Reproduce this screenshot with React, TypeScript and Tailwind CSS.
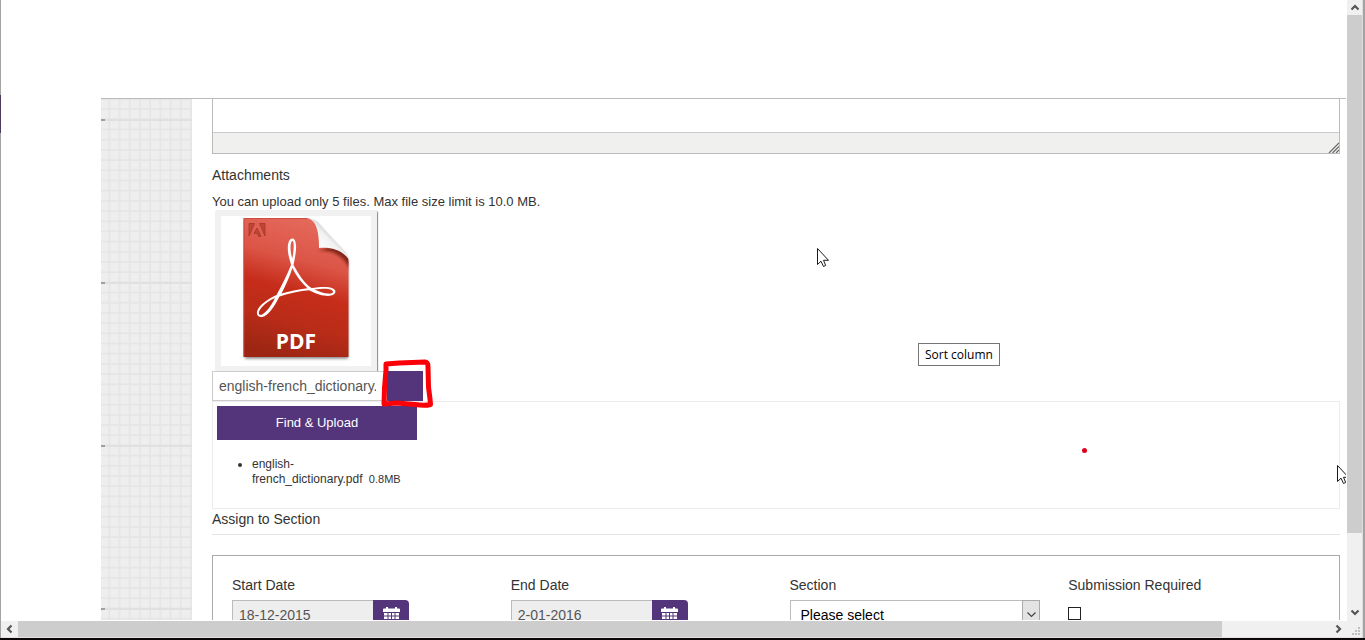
import React from "react";

function GridBackdrop() {
  return (
    <svg className="absolute inset-0 h-full w-full" aria-hidden="true">
      <defs>
        <pattern id="cells" x="-1" y="11" width="10.2" height="10.19" patternUnits="userSpaceOnUse">
          <rect width="10.2" height="10.19" fill="#eeeeee" />
          <rect x="8.6" width="1.6" height="10.19" fill="#e5e5e5" />
          <rect y="8.6" width="10.2" height="1.59" fill="#e5e5e5" />
        </pattern>
        <pattern id="ticks" x="0" y="20" width="91" height="163" patternUnits="userSpaceOnUse">
          <rect width="91" height="2" fill="#e0e0e0" />
          <rect width="4" height="2" fill="#a0a0a0" />
        </pattern>
      </defs>
      <rect width="100%" height="100%" fill="url(#cells)" />
      <rect width="100%" height="100%" fill="url(#ticks)" />
    </svg>
  );
}

function PdfIcon() {
  return (
    <svg viewBox="0 0 150 150" className="block h-[150px] w-[150px]" role="img" aria-label="PDF file">
      <defs>
        <linearGradient id="red" x1="0.6" y1="0" x2="0.4" y2="1">
          <stop offset="0" stopColor="#e46a5c" />
          <stop offset="0.3" stopColor="#dc5547" />
          <stop offset="0.52" stopColor="#c62d1a" />
          <stop offset="0.75" stopColor="#b92c18" />
          <stop offset="1" stopColor="#9c2613" />
        </linearGradient>
        <linearGradient id="curl" x1="0.25" y1="0.75" x2="0.7" y2="0.3">
          <stop offset="0" stopColor="#ffffff" />
          <stop offset="0.55" stopColor="#f2f2f2" />
          <stop offset="1" stopColor="#b0b0b0" />
        </linearGradient>
        <filter id="soft" x="-20%" y="-20%" width="140%" height="140%">
          <feGaussianBlur stdDeviation="1.6" />
        </filter>
        <clipPath id="sheet">
          <path d="M22.500 2H86C93 3 97 8 98 15L122 35Q127.500 39 127.500 46V141H22.500Z" />
        </clipPath>
      </defs>
      <path d="M24 6H95L127 44V142.500H24Z" fill="#000" opacity="0.5" filter="url(#soft)" />
      <path d="M22.500 2H86C93 3 97 8 98 15L122 35Q127.500 39 127.500 46V141H22.500Z" fill="url(#red)" />
      <g clipPath="url(#sheet)">
        <path d="M97 35C108 34 120 36 130 54L130 40L112 30Z" fill="#6c1308" opacity="0.8" filter="url(#soft)" />
      </g>
      <path d="M86 2C94 4 98 12 98 32C110 31 121 34 127.500 43C127 38 125 36 121 32L98 8Q93 2 86 2Z" fill="url(#curl)" />
      <path d="M23 140.500V2.500H86" fill="none" stroke="#c8483a" strokeWidth="0.8" />
      <g fill="#c04537" stroke="#9f3327" strokeWidth="0.7">
        <path d="M28 7.500H33.500L28 20Z" />
        <path d="M38.500 7.500H44V20Z" />
        <path d="M36 12L40 20.500H37.500L36.500 17.500H33Z" />
      </g>
      <path
        fillRule="evenodd"
        fill="#fff"
        d="M71.500 22.500C67 22.500 66 31 67.300 38C68 42 69.500 46 70 49C66 59 61 69 55.500 79C47 83 38 89 36.200 95C35 99 37.500 101.500 41 101C48 100 54 89 58.500 80.500C68 77 79 75 88 74.200C97 79 105 80.600 110 79.600C115 78.500 116 74.500 112 72.500C107 70 98 71 90.500 72C83 67 77 57 72.500 49C74 42 75.500 34 75 29C74.700 25 73.500 22.500 71.500 22.500ZM71.500 24.800C73.300 25.500 73 34 71.300 42.500C69 36 68.800 26 71.500 24.800ZM71.300 52C75 60 81 67 86.500 72.300C77 73.300 68 75.500 60.500 77.500C65 69 69 60 71.300 52ZM54 82C50 90 44 98 40 99C36.500 99 37.500 95 41 91C44 87.500 49 84 54 82ZM93.500 73.500C101 72.500 108 72.600 111 74.200C113.500 76 111 78 107 77.600C103 77.300 98 75.800 93.500 73.500Z"
      />
      <text x="75" y="133" textAnchor="middle" className="text-[21px] font-bold" fontFamily="Open Sans, sans-serif" fill="#fff">
        PDF
      </text>
    </svg>
  );
}

function CalendarIcon() {
  return (
    <svg viewBox="0 0 17 17" className="h-[17px] w-[17px]" fill="#fff" aria-hidden="true">
      <path d="M0 2.500Q0 1.500 1 1.500H3V0H5V1.500H12V0H14V1.500H16Q17 1.500 17 2.500V5H0Z" />
      <path d="M1 6H4.500V8.500H1ZM5.500 6H8V8.500H5.500ZM9 6H11.500V8.500H9ZM12.500 6H16V8.500H12.500ZM1 9.500H4.500V12H1ZM5.500 9.500H8V12H5.500ZM9 9.500H11.500V12H9ZM12.500 9.500H16V12H12.500ZM1 13H4.500V16H1ZM5.500 13H8V16H5.500ZM9 13H11.500V16H9Z" />
    </svg>
  );
}

function Pointer({ className }: { className: string }) {
  return (
    <svg viewBox="0 0 13 20" className={className} aria-hidden="true">
      <path d="M.5 .5V16.500L4 13.200L6.500 18.500L8.700 17.500L6.500 12.300H11.500Z" fill="#fff" stroke="#1a1a1a" />
    </svg>
  );
}

function Chevron({ d }: { d: string }) {
  return (
    <svg viewBox="0 0 10 10" className="h-[10px] w-[10px]" fill="none" stroke="#555" strokeWidth="2.200" aria-hidden="true">
      <path d={d} />
    </svg>
  );
}

function DateField({ id, label, value }: { id: string; label: string; value: string }) {
  return (
    <div className="px-[14px]">
      <label htmlFor={id} className="block leading-5">{label}</label>
      <div className="mt-[5px] flex">
        <input
          id={id}
          readOnly
          defaultValue={value}
          className="h-[30px] w-[141px] border border-r-0 border-[#bbb] bg-[#eeeeee] px-[6px] text-[#555] outline-none"
        />
        <button
          aria-label={`Choose ${label}`}
          className="flex h-[30px] w-[36px] items-center justify-center rounded-r-[4px] bg-[#54347a]"
        >
          <CalendarIcon />
        </button>
      </div>
    </div>
  );
}

function VerticalScroll() {
  return (
    <div className="flex w-[15px] flex-col bg-[#f0f0f0]">
      <button aria-label="Scroll up" className="flex h-[15px] items-center justify-center">
        <Chevron d="M1.500 6.500L5 3L8.500 6.500" />
      </button>
      <div className="grow-[518] bg-[#cdcdcd]" />
      <div className="grow-[71]" />
      <button aria-label="Scroll down" className="flex h-[17px] items-center justify-center">
        <Chevron d="M1.500 2.500L5 6L8.500 2.500" />
      </button>
    </div>
  );
}

function HorizontalScroll() {
  return (
    <div className="flex h-[16px] shrink-0 bg-[#f0f0f0]">
      <button aria-label="Scroll left" className="flex w-[17px] items-center justify-center">
        <Chevron d="M6.500 1.500L3 5L6.500 8.500" />
      </button>
      <div className="grow-[1204] bg-[#cdcdcd]" />
      <div className="grow-[108]" />
      <button aria-label="Scroll right" className="flex w-[17px] items-center justify-center">
        <Chevron d="M2.500 1.500L6 5L2.500 8.500" />
      </button>
      <svg viewBox="0 0 15 16" className="h-[16px] w-[15px]" fill="#bfbfbf" aria-hidden="true">
        <path d="M11 6h2v2h-2zM8 9h2v2h-2zM11 9h2v2h-2zM5 12h2v2h-2zM8 12h2v2h-2zM11 12h2v2h-2z" />
      </svg>
    </div>
  );
}

export default function App() {
  return (
    <div className="relative flex h-screen w-full flex-col overflow-hidden border-b-2 border-[#0b0706] bg-white font-['Liberation_Sans',sans-serif] text-[14px] text-[#333]">
      <div className="flex min-h-0 flex-1">
        <div className="flex w-px flex-col bg-[#a3a3a3]">
          <div className="mt-[95px] h-[38px] bg-[#4b3c63]" />
        </div>
        <div className="flex min-w-0 flex-1 flex-col border-b border-[#e2e2e2]">
          <div className="flex min-h-0 flex-1">
            <div className="relative mb-px mr-px flex min-w-0 flex-1 flex-col overflow-hidden">
              <header className="h-[98px] shrink-0" />
              <div className="ml-[100px] flex min-h-0 flex-1 overflow-hidden border-t border-[#bbb]">
                <aside className="relative w-[91px] shrink-0 bg-[#eee]">
                  <GridBackdrop />
                </aside>
                <main className="min-w-0 flex-1 pl-[20px] pr-[6px]">
                  <div className="border border-t-0 border-[#bbb]">
                    <div className="h-[33px]" />
                    <div className="flex h-[21px] items-end justify-end border-t border-[#ccc] bg-[#f0f0ef]">
                      <svg viewBox="0 0 11 11" className="h-[11px] w-[11px]" fill="none" stroke="#666" strokeWidth="1.200" aria-hidden="true">
                        <path d="M1 11L11 1M4.500 11L11 4.500M8 11L11 8" />
                      </svg>
                    </div>
                  </div>

                  <h2 className="mt-[11px] leading-5">Attachments</h2>
                  <p className="mt-[9px] text-[13px] leading-4">
                    You can upload only 5 files. Max file size limit is 10.0 MB.
                  </p>

                  <div className="ml-[3px] w-[162px] rounded-t-[2px] border-[6px] border-b-[5px] border-[#f1f1f1] bg-white shadow-[1px_1px_1px_#888]">
                    <PdfIcon />
                  </div>
                  <div className="relative flex h-[30px]">
                    <div className="w-[175px] border border-[#ccc] bg-white pl-[6px] pr-[10px]">
                      <input
                        aria-label="File name"
                        readOnly
                        defaultValue="english-french_dictionary.pdf"
                        className="block h-[28px] w-full text-[14px] text-[#555] outline-none"
                      />
                    </div>
                    <button aria-label="Remove file" className="h-[30px] w-[36px] bg-[#54347a]" />
                    <svg viewBox="0 0 54 52" className="absolute left-[168px] top-[-13px] h-[52px] w-[54px]" fill="none" aria-hidden="true">
                      <path d="M6 6L19 5L45 4Q48 4 48 9L48.500 29L50 41L50.500 46.500Q45 48 35 46.500L17 45L4 46L4.500 30L6 12Z" stroke="#fb0007" strokeWidth="5" strokeLinejoin="round" />
                    </svg>
                  </div>

                  <section className="h-[108px] border border-[#ececec] pl-[4px] pt-[4px]">
                    <button className="block h-[34px] w-[200px] bg-[#54347a] text-[13px] text-white">
                      Find &amp; Upload
                    </button>
                    <ul className="mt-[17px] w-[200px] list-disc pl-[35px] text-[12px] leading-[15px]">
                      <li>
                        english-
                        <br />
                        french_dictionary.pdf <span className="ml-[3px] text-[11px]">0.8MB</span>
                      </li>
                    </ul>
                  </section>

                  <h2 className="border-b border-[#e5e5e5] pb-[5px] leading-5">Assign to Section</h2>

                  <section className="mt-[20px] grid grid-cols-4 border border-[#aaa] pb-5 pl-[5px] pr-[6px] pt-[19px]">
                    <DateField id="start" label="Start Date" value="18-12-2015" />
                    <DateField id="end" label="End Date" value="2-01-2016" />
                    <div className="px-[14px]">
                      <label htmlFor="section" className="block leading-5">Section</label>
                      <div className="relative mt-[5px]">
                        <select
                          id="section"
                          className="block h-[30px] w-full appearance-none border border-[#bbb] bg-white pl-[10px] text-black outline-none"
                        >
                          <option>Please select</option>
                        </select>
                        <span className="pointer-events-none absolute right-0 top-0 flex h-[30px] w-[18px] items-center justify-center border border-[#aaa] bg-[#e3e3e3]">
                          <svg viewBox="0 0 9 6" className="h-[6px] w-[9px]" fill="none" stroke="#444" strokeWidth="1.200" aria-hidden="true">
                            <path d="M.5 .5L4.500 4.500L8.500 .5" />
                          </svg>
                        </span>
                      </div>
                    </div>
                    <div className="px-[14px]">
                      <label htmlFor="required" className="block leading-5">Submission Required</label>
                      <input
                        id="required"
                        type="checkbox"
                        className="mt-[12px] block h-[13px] w-[13px] appearance-none border border-[#222] bg-white"
                      />
                    </div>
                  </section>
                </main>
              </div>
              <Pointer className="absolute right-[-4px] top-[465px] h-[20px] w-[13px]" />
            </div>
            <VerticalScroll />
          </div>
          <HorizontalScroll />
        </div>
        <div className="w-[3px] border-l border-[#ddd] bg-[#a3a3a3]" />
      </div>

      <Pointer className="absolute left-[817px] top-[248px] h-[20px] w-[13px]" />
      <div
        role="tooltip"
        className="absolute left-[918px] top-[343px] border border-[#767676] bg-white px-[6px] py-[3px] font-['Open_Sans',sans-serif] text-[12px] leading-[15px] text-black"
      >
        Sort column
      </div>
      <div className="absolute left-[1082px] top-[448px] h-[5px] w-[5px] rounded-full bg-[#e0001b]" />
    </div>
  );
}
